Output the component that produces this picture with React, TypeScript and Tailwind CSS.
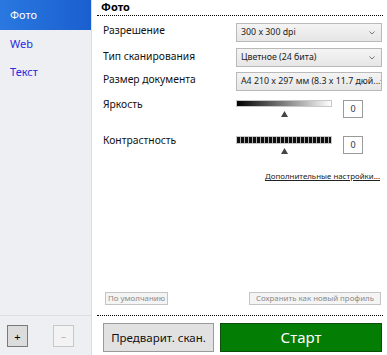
import React from "react";

const font = { fontFamily: '"Noto Sans", "Open Sans", sans-serif' };

function Select({ value }: { value: string }) {
  return (
    <div className="flex items-center justify-between w-[146px] h-[19px] border border-[#b9b9b9] bg-[linear-gradient(#f4f4f4,#e6e6e6)] pl-[4px] pr-[6px] overflow-hidden">
      <span className="text-[8.8px] text-[#222] whitespace-nowrap leading-none">{value}</span>
      <svg width="6" height="4" viewBox="0 0 6 4" className="shrink-0">
        <path d="M0.5 0.5 L3 3 L5.5 0.5" stroke="#777" fill="none" strokeWidth="1" />
      </svg>
    </div>
  );
}

function Marker() {
  return (
    <svg width="7" height="6" viewBox="0 0 7 6" className="block">
      <path d="M3.5 0 L7 6 L0 6 Z" fill="#444" />
    </svg>
  );
}

function ValueBox() {
  return (
    <div className="w-[20px] h-[18px] border border-[#9a9a9a] bg-white flex justify-center pt-[3px] text-[9px] leading-none text-[#334]">
      0
    </div>
  );
}

export default function App() {
  return (
    <div className="w-[387px] h-[355px] flex bg-white overflow-hidden" style={font}>
      {/* sidebar */}
      <div className="w-[92px] flex flex-col bg-[#edeff3]">
        <div className="h-[316px] border-r border-b border-[#dcdee3] flex flex-col">
          <div className="h-[30px] bg-[linear-gradient(90deg,#2a78e0,#1a5fcf)] text-white text-[11px] flex items-center pl-[10px]">
            Фото
          </div>
          <div className="h-[28px] text-[#2a2ae0] text-[11px] flex items-center pl-[10px]">Web</div>
          <div className="h-[28px] text-[#2a2ae0] text-[11px] flex items-center pl-[10px]">Текст</div>
        </div>
        <div className="flex-1 border-r border-[#dcdee3] flex items-start pt-[9px] pl-[7px] gap-[25px]">
          <div className="w-[21px] h-[22px] border border-[#7a7a7a] bg-[#dcdcdc] flex items-center justify-center text-[11px] leading-none text-black">
            +
          </div>
          <div className="w-[21px] h-[22px] border border-[#c8c8c8] bg-[#f3f3f3] flex items-center justify-center text-[10px] leading-none text-[#b8b8b8]">
            –
          </div>
        </div>
      </div>

      {/* main */}
      <div className="w-[286px] ml-[5px] flex flex-col">
        <div className="h-[16px] border-b border-dotted border-black pl-[4px] text-[11px] font-bold leading-[14px] text-black">
          Фото
        </div>

        <div className="mt-[7px] flex items-center justify-between pl-[6px] pr-[1px] h-[19px]">
          <span className="text-[10.3px] text-[#111] -mt-[3px]">Разрешение</span>
          <Select value="300 x 300 dpi" />
        </div>
        <div className="mt-[6px] flex items-center justify-between pl-[6px] pr-[1px] h-[19px]">
          <span className="text-[10.3px] text-[#111] -mt-[2px]">Тип сканирования</span>
          <Select value="Цветное (24 бита)" />
        </div>
        <div className="mt-[5px] flex items-center justify-between pl-[6px] pr-[1px] h-[19px]">
          <span className="text-[10.3px] text-[#111] -mt-[3px]">Размер документа</span>
          <Select value="A4 210 x 297 мм (8.3 x 11.7 дюй..." />
        </div>

        <div className="mt-[6px] flex pl-[6px] h-[30px]">
          <span className="w-[133px] text-[10.3px] text-[#111] leading-[14px]">Яркость</span>
          <div className="flex flex-col items-center pt-[3px]">
            <div className="w-[96px] h-[7px] border border-[#c8c8c8] bg-[linear-gradient(90deg,#000,#fff)]" />
            <div className="mt-[4px]"><Marker /></div>
          </div>
          <div className="ml-[11px] pt-[3px]"><ValueBox /></div>
        </div>

        <div className="mt-[6px] flex pl-[6px] h-[30px]">
          <span className="w-[133px] text-[10.3px] text-[#111] leading-[14px]">Контрастность</span>
          <div className="flex flex-col items-center pt-[3px]">
            <div className="w-[96px] h-[8px] border border-[#c8c8c8] bg-[repeating-linear-gradient(90deg,#111_0_3px,#aaa_3px_4px)]" />
            <div className="mt-[4px]"><Marker /></div>
          </div>
          <div className="ml-[11px] pt-[3px]"><ValueBox /></div>
        </div>

        <div className="mt-[8px] flex justify-end pr-[3px]">
          <span className="text-[7.9px] text-[#222] underline">Дополнительные настройки...</span>
        </div>

        <div className="flex-1" />

        <div className="flex justify-between pl-[8px] pr-[2px] mb-[10px]">
          <div className="h-[13px] border border-[#c4c4c4] bg-[#f4f4f4] px-[2px] text-[7.9px] leading-[11px] text-[#8a8a8a]">
            По умолчанию
          </div>
          <div className="h-[13px] border border-[#c4c4c4] bg-[#f4f4f4] px-[6px] text-[7.9px] leading-[11px] text-[#8a8a8a]">
            Сохранить как новый профиль
          </div>
        </div>

        <div className="border-t border-dotted border-black" />

        <div className="mt-[7px] mb-[3px] flex gap-[6px] pl-[6px] pr-[1px]">
          <div className="w-[111px] h-[29px] border border-[#9a9a9a] bg-[#e1e1e1] flex items-center justify-center text-[11.5px] text-[#111]">
            Предварит. скан.
          </div>
          <div className="flex-1 h-[29px] border border-[#0c4d0c] bg-[#047d04] flex items-center justify-center text-[15px] text-white">
            Старт
          </div>
        </div>
      </div>
    </div>
  );
}
